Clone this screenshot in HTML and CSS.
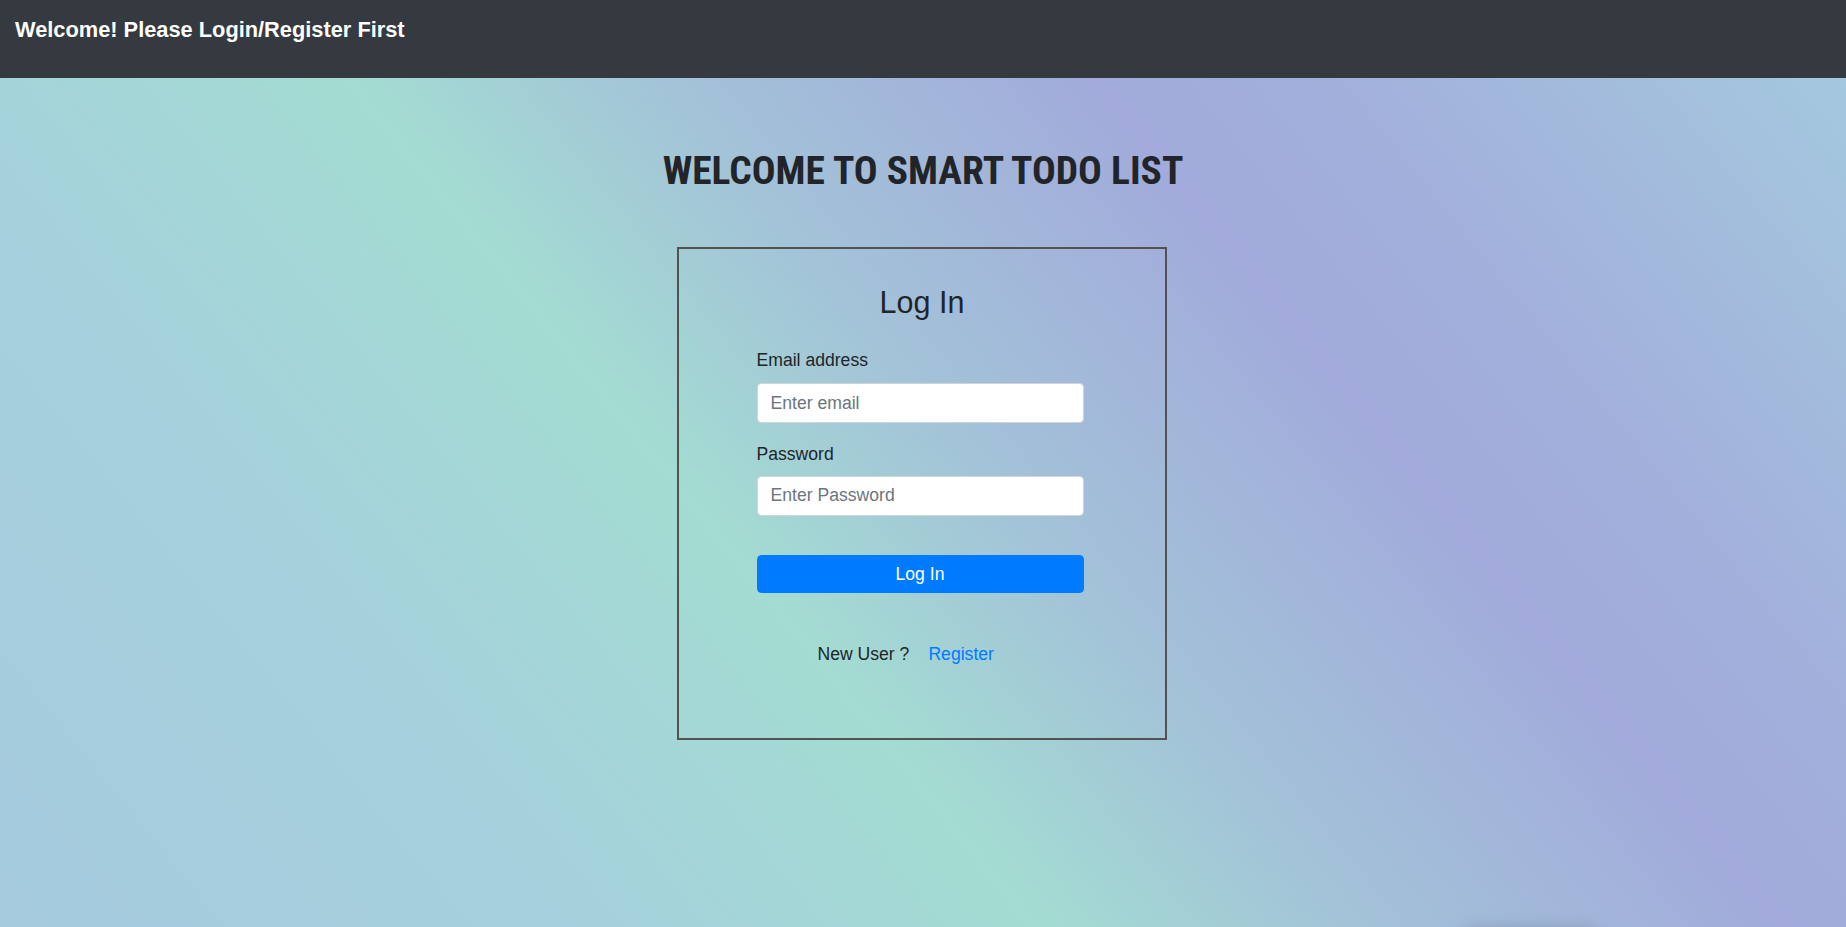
FILE: index.html
```html
<!DOCTYPE html>
<html lang="en">
<head>
<meta charset="utf-8">
<title>Smart Todo List</title>
<link rel="stylesheet" href="styles.css">
</head>
<body>
<nav class="navbar">
  <span class="brand">Welcome! Please Login/Register First</span>
</nav>
<main class="main">
  <h1 class="title">WELCOME TO SMART TODO LIST</h1>
  <section class="card">
    <h2 class="card-title">Log In</h2>
    <form class="form">
      <div class="group">
        <label class="label" for="email">Email address</label>
        <input class="input" id="email" type="email" placeholder="Enter email">
      </div>
      <div class="group">
        <label class="label" for="pw">Password</label>
        <input class="input" id="pw" type="password" placeholder="Enter Password">
      </div>
      <button class="btn" type="button">Log In</button>
      <div class="signup">
        <span class="muted">New User ?</span>
        <a class="link" href="#">Register</a>
      </div>
    </form>
  </section>
  <div class="shadow-blob"></div>
</main>
</body>
</html>
```
FILE: styles.css
```css
* { box-sizing: border-box; }
html, body { margin: 0; padding: 0; height: 100%; }
body {
  font-family: "Liberation Sans", Arial, sans-serif;
  font-size: 17.6px;
  color: #212529;
  display: flex;
  flex-direction: column;
  overflow: hidden;
}
.navbar {
  height: 78px;
  background: #343a40;
  padding: 15px 15px 0;
  flex: none;
}
.brand {
  display: block;
  color: #fff;
  font-weight: 700;
  font-size: 21.8px;
  line-height: 30px;
}
.main {
  position: relative;
  flex: 1;
  overflow: hidden;
  display: flex;
  flex-direction: column;
  align-items: center;
  background: linear-gradient(51deg,
    #a6cbdf 0px,
    #a5d0dc 450px,
    #a3dcd2 807px,
    #a3c3d8 1050px,
    #a2abdb 1380px,
    #a2afdb 1560px,
    #a4c8de 1968px);
}
.title {
  margin: 69px 0 0;
  font-family: "Roboto Condensed", Roboto, sans-serif;
  font-stretch: condensed;
  font-weight: 700;
  font-size: 39.5px;
  line-height: 47.4px;
  color: #212529;
}
.card {
  margin: 52.6px 0 0 -2px;
  width: 490px;
  border: 2px solid #54524f;
  padding: 35px 0 70.5px;
  display: flex;
  flex-direction: column;
  align-items: center;
}
.card-title {
  margin: 0;
  font-weight: 400;
  font-size: 30.5px;
  line-height: 37.4px;
}
.form {
  width: 327px;
  margin: 25.6px 0 0 -4px;
  display: flex;
  flex-direction: column;
}
.group { margin-bottom: 17.6px; }
.group + .group { margin-bottom: 0; }
.label {
  display: block;
  line-height: 26.4px;
  margin-bottom: 9.6px;
}
.group + .group .label { margin-bottom: 8.6px; }
.input {
  display: block;
  width: 100%;
  height: 40px;
  padding: 6px 13px;
  font-family: inherit;
  font-size: 17.6px;
  color: #495057;
  background: #fff;
  border: 1px solid #ced4da;
  border-radius: 4.4px;
}
.input::placeholder { color: #6c757d; opacity: 1; }
.btn {
  margin-top: 39px;
  height: 38px;
  width: 100%;
  background: #007bff;
  color: #fff;
  border: 1px solid #007bff;
  border-radius: 4.4px;
  font-family: inherit;
  font-size: 17.6px;
  line-height: 26px;
  padding: 0;
}
.signup {
  margin: 48px 0 0 61px;
  line-height: 26.4px;
  display: flex;
  gap: 19px;
}
.link { color: #007bff; text-decoration: none; }
.shadow-blob {
  position: absolute;
  left: 1460px;
  top: 855px;
  width: 140px;
  height: 40px;
  border-radius: 20px;
  background: #8ea2bf;
  box-shadow: 0 0 14px 6px rgba(120,140,170,.6);
}
```
